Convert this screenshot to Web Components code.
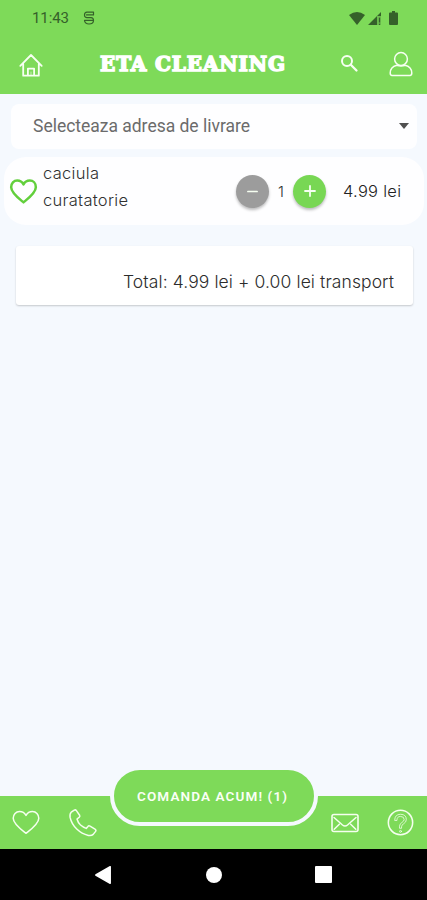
<!DOCTYPE html>
<html lang="ro"><head><meta charset="utf-8"><title>ETA CLEANING</title>
<style>html,body{margin:0;height:100%;background:#f5f9fe;overflow:hidden}</style></head>
<body><eta-app></eta-app>
<script>
const icons={
debug:['0 0 12 14','<path d="M10.5 1.2H4Q1.5 1.2 1.5 3.9T4 6.6H8Q10.5 6.6 10.5 9.5C10.5 11.7 8.5 13 6 13C3.5 13 1.5 11.7 1.5 9.3H10M3.5 3.9H10.5V1.2" stroke-width="1.2"/>'],
wifi:['0 0 16 13','<path d="M0 3Q8-3 16 3L8 13Z" fill="currentColor" stroke="none"/>'],
signal:['0 0 14 13','<path d="M0 13L13 0V4H9V13Z" fill="currentColor" stroke="none"/><path d="M9 4H13V13H9Z" fill="currentColor" opacity=".25" stroke="none"/><path d="M11.5 6V10M11.5 12V12.5" stroke-width="1.2"/>'],
battery:['0 0 9 14','<path d="M1 1.5H3V0H6V1.5H8Q9 1.5 9 2.5V13Q9 14 8 14H1Q0 14 0 13V2.5Q0 1.5 1 1.5Z" fill="currentColor" stroke="none"/>'],
home:['0 0 24 24','<path d="M1.3 12.8L12 2L22.7 12.8M4.2 11V22.7H19.8V11M8.9 22.5V15.6H15.1V22.5" stroke-width="1.8"/><path d="M12 19V22" stroke-width="1" opacity=".6"/>'],
search:['0 0 18 18','<circle cx="7" cy="7" r="5" stroke-width="2"/><path d="M10.8 10.8L16.5 16.5" stroke-width="2.3"/>'],
user:['0 0 24 26','<circle cx="12" cy="8" r="6.4"/><path d="M7.7 14.2C3.5 15.4 1.2 18.5 1.2 22Q1.2 24.4 3 24.4H21Q22.8 24.4 22.8 22C22.8 18.5 20.5 15.4 16.3 14.2Q12 15.6 7.7 14.2Z"/>'],
heart:['0 0 28 26','<path d="M14 24.3C10 21 1.2 14.5 1.2 8.6C1.2 4.4 4 1.6 7.5 1.6C10.5 1.6 12.8 3.3 14 5.6C15.2 3.3 17.5 1.6 20.5 1.6C24 1.6 26.8 4.4 26.8 8.6C26.8 14.5 18 21 14 24.3Z"/>'],
phone:['0 0 28 28','<path d="M2.2 3.2L5.3 1.1Q6.6.5 7.4 1.6L10.6 6.2Q11.3 7.4 10.1 8.4L8 10Q9 13.8 11.5 16T17.2 19.4L18.9 17.4Q19.7 16.4 21 17.1L26 20.1Q27.5 21 26.6 22.4L24.2 25.4Q22.5 27 19.4 26.4C10.8 24.4 3 17.4 1.1 8.4Q.6 4.6 2.2 3.2Z"/>'],
mail:['0 0 28 20','<rect x="1" y="1.5" width="26" height="17" rx="2" stroke-width="1.6"/><path d="M3 4.5L11.5 12Q14 14 16.5 12L25 4.5M3.2 16.2L8.3 11.2M24.8 16.2L19.7 11.2"/>'],
help:['0 0 28 28','<circle cx="14" cy="14" r="12.6" stroke-width="1.6"/><path d="M8 11.5Q8 5.5 14 5.5T20 11Q20 13.6 17.4 15.2T15.1 18.5V20H13V17.8Q13 15.5 15.4 14T17.8 11Q17.8 7.7 14 7.7T10.3 11.5Z" stroke-width=".8"/><circle cx="14" cy="23.2" r="1" stroke-width=".8"/>'],
minus:['0 0 12 12','<path d="M1 6H11" stroke-width="1.9"/>'],
plus:['0 0 12 12','<path d="M1 6H11M6 1V11" stroke-width="1.8"/>'],
down:['0 0 10 6','<path d="M0 0H10L5 6Z" fill="currentColor" stroke="none"/>'],
back:['0 0 16 18','<path d="M15.2.7V17.3L.8 9Z" fill="currentColor"/>'],
circle:['0 0 16 16','<circle cx="8" cy="8" r="8" fill="currentColor" stroke="none"/>'],
square:['0 0 17 17','<rect width="17" height="17" rx="1" fill="currentColor" stroke="none"/>']};
const define=(name,html,after)=>customElements.define(name,class extends HTMLElement{
 connectedCallback(){if(this.shadowRoot)return;const r=this.attachShadow({mode:'open'});const t=document.createElement('template');t.innerHTML=html;r.append(t.content.cloneNode(true));if(after)after(this,r)}});
define('eta-icon','<style>:host{display:block;flex:none;line-height:0}svg{display:block;width:100%;height:100%;overflow:visible}</style><svg fill="none" stroke="currentColor" stroke-linecap="round" stroke-linejoin="round" preserveAspectRatio="none"></svg>',(h,r)=>{
 const [box,art]=icons[h.getAttribute('name')],s=r.querySelector('svg');s.setAttribute('viewBox',box);s.setAttribute('stroke-width',h.getAttribute('weight')||1.5);s.innerHTML=art;h.style.width=h.getAttribute('w')+'px';h.style.height=h.getAttribute('h')+'px'});
// Spreads the glyphs evenly over the width given in the "w" attribute.
define('eta-label','<style>:host{display:block;flex:none;white-space:nowrap}span{display:inline-block}</style><span><slot></slot></span>',(h,r)=>{
 const w=+h.getAttribute('w'),s=r.querySelector('span');h.style.width=w+'px';
 const n=r.querySelector('slot').assignedNodes({flatten:true}).map(x=>x.textContent).join('').length;
 const m=s.getBoundingClientRect().width;if(n>1)s.style.letterSpacing=((w-m)/(n-1))+'px'});
define('eta-status',`<style>:host{display:flex;box-sizing:border-box;height:36px;padding:0 29px 0 32px;align-items:center;color:#35612a;font:15px/36px Roboto,sans-serif}.debug{margin-left:14px}.wifi{margin-left:auto}.sig{margin-left:3px}.bat{margin-left:7px}</style>
<eta-label w="37">11:43</eta-label><eta-icon class="debug" name="debug" w="12" h="14"></eta-icon><eta-icon class="wifi" name="wifi" w="16" h="13"></eta-icon><eta-icon class="sig" name="signal" w="14" h="13"></eta-icon><eta-icon class="bat" name="battery" w="9" h="14"></eta-icon>`);
define('eta-header',`<style>:host{display:flex;height:58px;box-sizing:border-box;padding:0 14px 0 19px;align-items:center;color:#f7fff2}.title{margin:-2px auto 0 57px;font:bold 20px/30px "DejaVu Serif",serif;-webkit-text-stroke:1.5px currentColor;color:#fff}.search{margin:-4px 31px 0 0}.user{margin-top:-2px}</style>
<eta-icon name="home" w="24" h="24"></eta-icon><eta-label class="title" w="185">ETA CLEANING</eta-label><eta-icon class="search" name="search" w="18" h="18"></eta-icon><eta-icon class="user" name="user" w="24" h="26"></eta-icon>`);
define('eta-select',`<style>:host{display:flex;align-items:center;height:45px;margin:10px 10px 0 11px;padding:0 8px 0 22px;border-radius:8px;background:#fefeff;color:#6b6b6b;font:17.5px/44px Roboto,sans-serif}eta-label{margin-top:-1px}eta-icon{margin:-1px 0 0 auto;color:#505050}</style><eta-label w="217"><slot></slot></eta-label><eta-icon name="down" w="10" h="6"></eta-icon>`);
define('eta-round',`<style>:host{display:grid;place-items:center;flex:none;width:33px;height:33px;border-radius:50%;background:var(--fill);color:#f6fff1;box-shadow:0 2px 3px #0004}</style><slot></slot>`);
define('eta-item',`<style>:host{display:flex;align-items:center;box-sizing:border-box;height:68px;margin:8px 3px 0 4px;padding-left:6px;border-radius:22px;background:#fefeff;color:#303030;font:300 16.5px/27px Inter,sans-serif}.heart{color:#62cf3c}.names{width:193px;margin:-8px 0 0 6px}.minus{--fill:#9c9c9c}.plus{--fill:#78d754}.n{width:24px;text-align:center;font-size:15px}.price{margin:1px 0 0 17px;color:#222}</style>
<eta-icon class="heart" name="heart" weight="2.6" w="27" h="25"></eta-icon><div class="names"><eta-label w="56">caciula</eta-label><eta-label w="85">curatatorie</eta-label></div><eta-round class="minus"><eta-icon name="minus" w="11" h="11"></eta-icon></eta-round><div class="n">1</div><eta-round class="plus"><eta-icon name="plus" w="12" h="12"></eta-icon></eta-round><eta-label class="price" w="58">4.99 lei</eta-label>`);
define('eta-total',`<style>:host{display:flex;justify-content:flex-end;box-sizing:border-box;height:59px;margin:21px 14px 0 16px;padding:22px 19px 0;border-radius:3px;background:#fff;box-shadow:0 1px 2px #0003;color:#2c2c2c;font:300 17.5px/27px Inter,sans-serif}</style><eta-label w="271"><slot></slot></eta-label>`);
define('eta-footer',`<style>:host{display:flex;position:relative;align-items:center;height:53px;margin-top:auto;box-sizing:border-box;padding:0 13px 0 12px;background:#7eda59;color:#f5ffef}.phone{margin-left:29px}.mail{margin-left:auto}.help{margin-left:28px}.order{position:absolute;left:110px;top:-30px;box-sizing:border-box;width:208px;height:60px;border:4px solid #f5f9fe;border-radius:30px;background:#7eda59;display:grid;place-items:center;font:600 13.5px/52px Roboto,sans-serif;color:#fafff6}.order eta-label{margin-left:-4px}</style>
<eta-icon name="heart" w="28" h="25"></eta-icon><eta-icon class="phone" name="phone" w="28" h="28"></eta-icon><eta-icon class="mail" name="mail" w="28" h="20"></eta-icon><eta-icon class="help" name="help" w="27" h="27"></eta-icon><div class="order"><eta-label w="150">COMANDA ACUM! (1)</eta-label></div>`);
define('eta-nav',`<style>:host{display:flex;align-items:center;height:51px;box-sizing:border-box;padding:0 95px 0 95px;background:#000;color:#fff}.c{margin-left:95px}.s{margin-left:auto}</style><eta-icon name="back" w="16" h="18"></eta-icon><eta-icon class="c" name="circle" w="16" h="16"></eta-icon><eta-icon class="s" name="square" w="17" h="17"></eta-icon>`);
define('eta-app',`<style>:host{display:flex;flex-direction:column;width:427px;height:900px;background:#f5f9fe}.top{background:#7eda59;height:94px}</style><div class="top"><eta-status></eta-status><eta-header></eta-header></div><eta-select>Selecteaza adresa de livrare</eta-select><eta-item></eta-item><eta-total>Total: 4.99 lei + 0.00 lei transport</eta-total><eta-footer></eta-footer><eta-nav></eta-nav>`);
</script></body></html>
